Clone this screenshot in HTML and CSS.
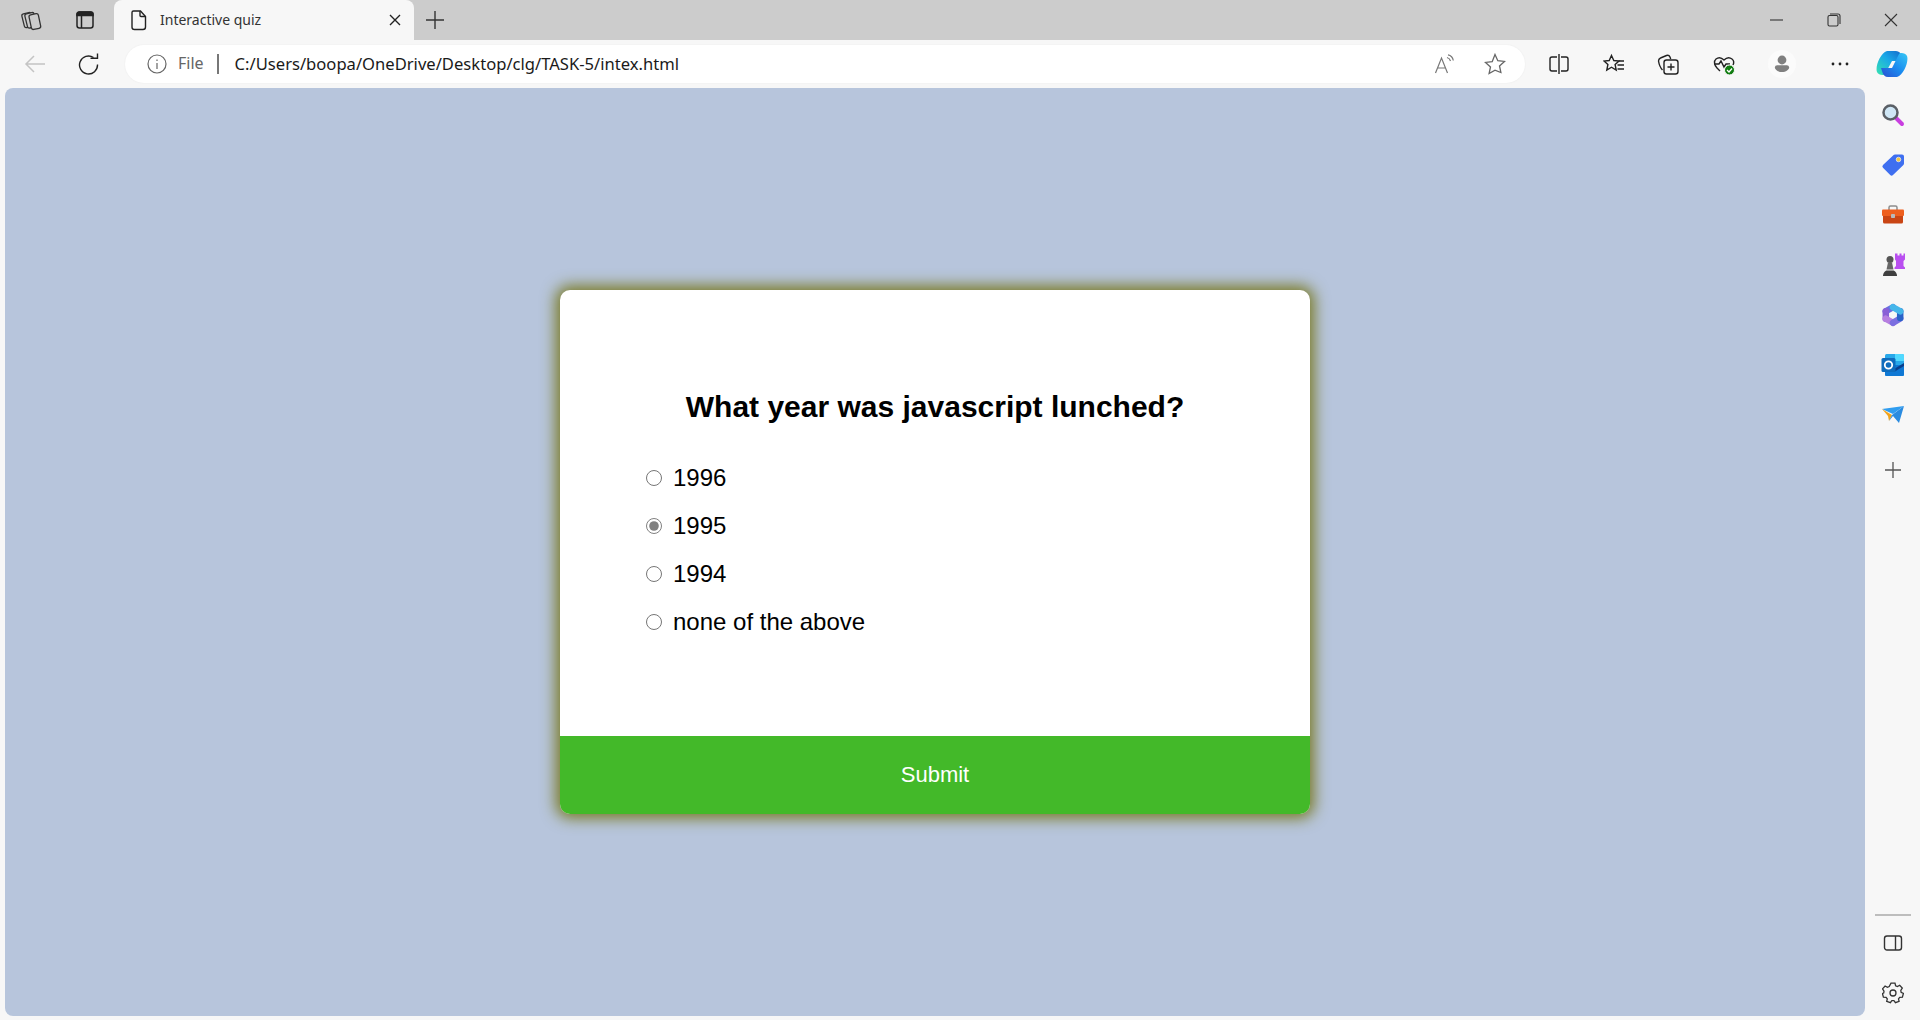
FILE: index.html
```html
<!DOCTYPE html>
<html lang="en">
<head>
    <meta charset="UTF-8">
    <title>Interactive quiz</title>
    <link rel="stylesheet" href="styles.css">
</head>
<body>
    <div class="tabstrip">
        <span class="strip-btn">
            <svg width="24" height="24" viewBox="0 0 24 24" fill="#ccc" stroke="#333" stroke-width="1.300"><rect x="3" y="5" width="9.500" height="14" rx="2" transform="rotate(-14 8 12)"/><rect x="6" y="5" width="9.500" height="14.500" rx="2" transform="rotate(-14 11 12)"/><rect x="10" y="6" width="9.500" height="15" rx="2" transform="rotate(-12 15 13)"/></svg>
        </span>
        <span class="strip-btn strip-btn-b">
            <svg width="22" height="22" viewBox="0 0 22 22" fill="none" stroke="#222" stroke-width="1.500"><rect x="3" y="3" width="16" height="16" rx="2.500"/><path d="M3 6.500V5.500A2.500 2.500 0 0 1 5.500 3h11A2.500 2.500 0 0 1 19 5.500v1z" fill="#222"/><path d="M7.500 7v12"/></svg>
        </span>
        <div class="tab">
            <svg width="20" height="22" viewBox="0 0 20 22" fill="none" stroke="#222" stroke-width="1.400"><path d="M4.500 2h7l5 5.500V18a2.500 2.500 0 0 1-2.500 2.500H5.500A2.500 2.500 0 0 1 3 18V3.500A1.500 1.500 0 0 1 4.500 2z"/><path d="M11 2v4.500a1 1 0 0 0 1 1h4.500"/></svg>
            <span class="tab-title">Interactive quiz</span>
            <svg class="tab-close" width="12" height="12" viewBox="0 0 12 12" stroke="#222" stroke-width="1.4"><path d="M1 1l10 10M11 1L1 11"/></svg>
        </div>
        <span class="new-tab">
            <svg width="18" height="18" viewBox="0 0 18 18" stroke="#333" stroke-width="1.400"><path d="M9 0v18M0 9h18"/></svg>
        </span>
        <div class="win-btns">
            <svg width="14" height="14" viewBox="0 0 14 14" stroke="#333" stroke-width="1.100"><path d="M0 7h13"/></svg>
            <svg width="14" height="14" viewBox="0 0 14 14" fill="none" stroke="#333" stroke-width="1.100"><rect x="1" y="2.500" width="10" height="10.500" rx="1.500"/><path d="M3 1h8a2 2 0 0 1 2 2v8"/></svg>
            <svg width="14" height="14" viewBox="0 0 14 14" stroke="#333" stroke-width="1.100"><path d="M1 1l12 12M13 1L1 13"/></svg>
        </div>
    </div>

    <div class="toolbar">
        <span class="nav-btn">
            <svg width="22" height="20" viewBox="0 0 22 20" fill="none" stroke="#c4c4c4" stroke-width="1.500"><path d="M21 10H2M10 2l-8 8 8 8"/></svg>
        </span>
        <span class="nav-btn">
            <svg width="22" height="22" viewBox="0 0 22 22" fill="none" stroke="#222" stroke-width="1.400"><path d="M15.500 4.500a9 9 0 1 0 4 7"/><path d="M12.500 5.200h7V0.500"/></svg>
        </span>
        <div class="address">
            <svg width="20" height="20" viewBox="0 0 20 20" fill="none" stroke="#666" stroke-width="1.200"><circle cx="10" cy="10" r="9"/><path d="M10 9v6M10 5.500v1.500"/></svg>
            <span class="file-label">File</span>
            <span class="addr-sep"></span>
            <span class="url">C:/Users/boopa/OneDrive/Desktop/clg/TASK-5/intex.html</span>
            <span class="addr-icons">
                <svg width="22" height="22" viewBox="0 0 22 22" fill="none" stroke="#777" stroke-width="1.200"><path d="M1.500 20L7.500 5l6 15M3.500 15h8"/><path d="M12 3.500c2 .5 3 1.500 3.500 3.500M13 .8c3 .5 4.800 2.700 5.300 5.700" transform="translate(1 1)"/></svg>
                <svg width="22" height="22" viewBox="0 0 22 22" fill="none" stroke="#666" stroke-width="1.300"><path d="M11 1.500l2.800 6.200 6.700.7-5 4.500 1.400 6.600L11 17.200l-5.900 3.300 1.400-6.600-5-4.500 6.700-.7z"/></svg>
            </span>
        </div>
        <div class="tools">
            <svg width="22" height="22" viewBox="0 0 22 22" fill="none" stroke="#222" stroke-width="1.400"><path d="M9 4H4a2 2 0 0 0-2 2v10a2 2 0 0 0 2 2h5M13 4h5a2 2 0 0 1 2 2v10a2 2 0 0 1-2 2h-5M11 1v20"/></svg>
            <svg width="22" height="22" viewBox="0 0 22 22" fill="none" stroke="#222" stroke-width="1.400"><path d="M8.500 2.500l2.300 5 5.200.5-3.900 3.500 1.100 5.500-4.700-2.800-4.700 2.800 1.100-5.500L1 8l5.200-.5z"/><path d="M15.500 8H21M14.500 12H21M14.500 16H21"/></svg>
            <svg width="22" height="22" viewBox="0 0 22 22" fill="none" stroke="#222" stroke-width="1.400"><rect x="7" y="7" width="14" height="14" rx="2.500"/><path d="M14 10.500v7M10.500 14h7"/><path d="M5.500 17C3.500 15 2 11 1.500 8c0-1.500.7-2.500 2-3l6-2.500c1.500-.5 2.800 0 3.500 1.500l.7 2"/></svg>
            <svg width="24" height="24" viewBox="0 0 24 24" fill="none"><path d="M8 19l-3-3C2 13 1.800 9 4 7c2.500-2 5.500-1.500 8 1 2.500-2.500 5.500-3 8-1 1.800 1.500 2 4 1 6" stroke="#222" stroke-width="1.400"/><path d="M2 12h5l2-3 3 6 2-3h4" stroke="#222" stroke-width="1.400"/><circle cx="17.500" cy="18" r="5" fill="#107c10" stroke="#f7f7f7"/><path d="M15 18l2 2 3-3.500" stroke="#fff" stroke-width="1.300"/></svg>
            <span class="profile">
                <svg width="16" height="18" viewBox="0 0 20 22" fill="#808080"><circle cx="10" cy="6" r="5.500"/><path d="M1 15a3 3 0 0 1 3-2.500h12a3 3 0 0 1 3 2.500c0 3-4 6-9 6s-9-3-9-6z"/></svg>
            </span>
            <svg width="22" height="22" viewBox="0 0 22 22" fill="#222"><circle cx="4" cy="11" r="1.400"/><circle cx="11" cy="11" r="1.400"/><circle cx="18" cy="11" r="1.400"/></svg>
            <svg class="copilot" width="32" height="28" viewBox="0 0 32 28" fill="none">
                <defs>
                    <linearGradient id="copilotLeft" x1="0" y1="1" x2="1" y2="0"><stop offset="0" stop-color="#36e3b0"/><stop offset=".55" stop-color="#1aa8e8"/><stop offset="1" stop-color="#1565c8"/></linearGradient>
                    <linearGradient id="copilotRight" x1="0" y1="1" x2="1" y2="0"><stop offset="0" stop-color="#2a4fd0"/><stop offset=".5" stop-color="#1a8cf0"/><stop offset="1" stop-color="#38c8f4"/></linearGradient>
                </defs>
                <path d="M11 1h9c3 0 5 2 6 6l1 4H16l-7 13c-1 2-7 1-8-2C-1 17 4 3 11 1z" fill="url(#copilotLeft)"/>
                <path d="M21 27h-9c-3 0-5-2-6-6l-1-3h11l7-14c1-2 7-1 8 2 2 5-3 19-10 21z" fill="url(#copilotRight)"/>
            </svg>
        </div>
    </div>

    <div class="workspace">
        <main class="page">
            <form class="quiz-card">
                <div class="quiz-body">
                    <h2 class="question">What year was javascript lunched?</h2>
                    <ul class="answers">
                        <li><label><input type="radio" name="answer"> 1996</label></li>
                        <li><label><input type="radio" name="answer" checked> 1995</label></li>
                        <li><label><input type="radio" name="answer"> 1994</label></li>
                        <li><label><input type="radio" name="answer"> none of the above</label></li>
                    </ul>
                </div>
                <button type="button" class="submit">Submit</button>
            </form>
        </main>

        <aside class="sidebar">
            <span class="side-icon">
                <svg width="24" height="24" viewBox="0 0 24 24" fill="none"><path d="M14 14l7 7" stroke="#c93fe0" stroke-width="4" stroke-linecap="round"/><circle cx="9.500" cy="9.500" r="7" fill="#cfe6f5" stroke="#5a5f66" stroke-width="2.500"/></svg>
            </span>
            <span class="side-icon">
                <svg width="24" height="24" viewBox="0 0 24 24"><path d="M14 1.500h7a2 2 0 0 1 2 2v7a2 2 0 0 1-.6 1.400L12 22a2 2 0 0 1-2.800 0L2 14.800a2 2 0 0 1 0-2.800L12.600 2a2 2 0 0 1 1.400-.5z" fill="#3f6ff0"/><circle cx="17.500" cy="6.500" r="2.300" fill="#f2c744" stroke="#fff" stroke-width=".6"/></svg>
            </span>
            <span class="side-icon">
                <svg width="24" height="24" viewBox="0 0 24 24" fill="none"><path d="M8 7V4.500A1.500 1.500 0 0 1 9.500 3h5A1.500 1.500 0 0 1 16 4.500V7" stroke="#8d8d8d" stroke-width="1.500"/><rect x="1" y="6.500" width="22" height="6.500" rx="1" fill="#ee5f1e"/><path d="M2 13h20v6a1.500 1.500 0 0 1-1.500 1.500h-17A1.500 1.500 0 0 1 2 19z" fill="#c94514"/><rect x="10" y="11" width="4" height="4" rx=".8" fill="#b9b9b9"/></svg>
            </span>
            <span class="side-icon">
                <svg width="24" height="24" viewBox="0 0 24 24"><path d="M14 0.500h2.500v2h2v-2h2v2h2v-2H24v6l-1.500 1.500v5L24 14.500V16H13.500v-1.500L15 13V8l-1-1.500z" fill="#b94ff0"/><circle cx="9" cy="6.500" r="3.500" fill="#555"/><path d="M7 9.500h4l1.500 7h-7z" fill="#666"/><path d="M2 23c0-3 2-5.500 4-5.500h6c2 0 4 2.500 4 5.500z" fill="#3f3f3f"/></svg>
            </span>
            <span class="side-icon">
                <svg width="24" height="24" viewBox="0 0 24 24" fill="none" stroke-width="6.500" stroke-linecap="round"><path d="M4.800 8.300L12 4.200" stroke="#6a6fe0"/><path d="M4.800 8.300v7.400" stroke="#8a5fd6"/><path d="M4.800 15.700L12 19.800" stroke="#b77fe0"/><path d="M12 19.800l7.200-4.400" stroke="#7b6fe0"/><path d="M19.200 8.300v6.700" stroke="#2a62c8"/><path d="M12 4.200l7.200 4.100" stroke="#45b6ea"/></svg>
            </span>
            <span class="side-icon">
                <svg width="24" height="24" viewBox="0 0 24 24"><rect x="4" y="1" width="19" height="22" rx="1.500" fill="#28a8ea"/><path d="M14 1h7.500A1.500 1.500 0 0 1 23 2.500V8h-9z" fill="#50d9ff"/><path d="M4 12h19v9.500a1.500 1.500 0 0 1-1.500 1.500h-16A1.500 1.500 0 0 1 4 21.500z" fill="#0f78d4"/><path d="M13 16l10-6v3l-10 6z" fill="#0a3f8c"/><rect x="0.500" y="5" width="14" height="14" rx="1.500" fill="#0f6cbd"/><circle cx="7.500" cy="12" r="3.700" fill="none" stroke="#fff" stroke-width="1.800"/></svg>
            </span>
            <span class="side-icon">
                <svg width="24" height="24" viewBox="0 0 24 24"><path d="M1 6l22-3-11 8z" fill="#2f9df0"/><path d="M1 6l6 7 1 5 3-6z" fill="#f2a41c"/><path d="M8 18l4-5 6 7 5-17-12 9z" fill="#2a8be0"/></svg>
            </span>
            <span class="side-icon side-icon-add">
                <svg width="16" height="16" viewBox="0 0 16 16" stroke="#555" stroke-width="1.300"><path d="M8 0v16M0 8h16"/></svg>
            </span>
            <span class="side-space"></span>
            <span class="side-rule"></span>
            <span class="side-icon">
                <svg width="20" height="18" viewBox="0 0 20 18" fill="none" stroke="#333" stroke-width="1.400"><rect x="1.500" y="2" width="17" height="14" rx="2.500"/><path d="M12.500 2v14"/></svg>
            </span>
            <span class="side-icon">
                <svg width="22" height="22" viewBox="0 0 22 22" fill="none" stroke="#333" stroke-width="1.300"><circle cx="11" cy="11" r="3"/><path d="M9 1.500h4l.6 2.600 1.800.8 2.300-1.300 2.600 3-1.500 2.200.3 2 2.300 1.200-1 3.800-2.700.1-1.200 1.600.6 2.600-3.700 1.300-1.500-2.200h-2l-1.500 2.200-3.700-1.300.6-2.600-1.200-1.600-2.700-.1-1-3.800L1.700 11.600l.3-2L.5 7.400l2.600-3 2.300 1.300 1.800-.8z" transform="translate(0 -.3) scale(1 .98)"/></svg>
            </span>
        </aside>
    </div>
</body>
</html>
```

FILE: styles.css
```css
/* page frame */
* {
    box-sizing: border-box;
}

html,
body {
    height: 100%;
}

body {
    margin: 0;
    display: flex;
    flex-direction: column;
    font-family: "Liberation Sans", Arial, sans-serif;
    background-color: #f7f7f7;
    overflow: hidden;
}

svg {
    display: block;
    flex: none;
}

/* tab strip */
.tabstrip {
    height: 40px;
    flex: none;
    display: flex;
    align-items: center;
    background-color: #cccccc;
}

.strip-btn {
    margin-left: 20px;
}

.strip-btn-b {
    margin-left: 30px;
}

.tab {
    width: 300px;
    height: 40px;
    margin-left: 18px;
    padding: 0 13px 0 15px;
    display: flex;
    align-items: center;
    background-color: #f7f7f7;
    border-radius: 8px 8px 0 0;
}

.tab-title {
    margin: 0 0 2px 11px;
    font-family: "Noto Sans", sans-serif;
    font-size: 14px;
    color: #333;
}

.tab-close {
    margin-left: auto;
}

.new-tab {
    margin-left: 12px;
}

.win-btns {
    margin-left: auto;
    margin-right: 22px;
    display: flex;
    gap: 43px;
}

/* address bar row */
.toolbar {
    height: 48px;
    flex: none;
    display: flex;
    align-items: center;
    background-color: #f7f7f7;
}

.nav-btn {
    margin-left: 24px;
}

.nav-btn + .nav-btn {
    margin-left: 32px;
}

.address {
    width: 1400px;
    height: 38px;
    flex: none;
    margin-left: 25px;
    padding: 0 19px 0 22px;
    display: flex;
    align-items: center;
    background-color: #fff;
    border-radius: 19px;
    box-shadow: 0 0 2px rgba(0, 0, 0, 0.06);
}

.file-label {
    margin: 0 0 2px 11px;
    font-family: "Noto Sans", sans-serif;
    font-size: 16px;
    color: #666;
}

.addr-sep {
    width: 2px;
    height: 20px;
    margin-left: 13px;
    background-color: #777;
}

.url {
    margin: 0 0 2px 16px;
    font-family: "Noto Sans", sans-serif;
    font-size: 16.6px;
    color: #1a1a1a;
}

.addr-icons {
    margin-left: auto;
    display: flex;
    gap: 28px;
}

.tools {
    flex: 1;
    margin-left: 23px;
    display: flex;
    align-items: center;
    gap: 32.5px;
}

.profile {
    width: 28px;
    height: 28px;
    display: flex;
    align-items: center;
    justify-content: center;
    border-radius: 50%;
    background-color: #fbfbfb;
}

.copilot {
    margin-left: -7px;
}

/* page area and side panel */
.workspace {
    flex: 1;
    display: flex;
    min-height: 0;
}

.page {
    flex: 1;
    margin: 0 0 4px 5px;
    display: flex;
    align-items: center;
    justify-content: center;
    background-color: #b7c5dc;
    border-radius: 8px;
}

.sidebar {
    width: 55px;
    flex: none;
    padding: 2px 0;
    display: flex;
    flex-direction: column;
    align-items: center;
}

.side-icon {
    height: 50px;
    flex: none;
    display: flex;
    align-items: center;
    justify-content: center;
}

.side-icon-add {
    margin-top: 5px;
}

.side-space {
    flex: 1;
}

.side-rule {
    width: 36px;
    height: 2px;
    flex: none;
    margin-bottom: 2px;
    background-color: #bdbdbd;
}

/* quiz card */
.quiz-card {
    width: 750px;
    height: 524px;
    display: flex;
    flex-direction: column;
    background-color: #fff;
    border-radius: 10px;
    box-shadow: 0 0 15px 4px #787820;
    overflow: hidden;
}

.quiz-body {
    flex: 1;
    padding: 99px 80px 0;
}

.question {
    margin: 0;
    font-size: 30px;
    line-height: 36px;
    text-align: center;
    color: #000;
}

.answers {
    margin: 29px 0 0;
    padding: 0;
    list-style: none;
}

.answers li {
    height: 48px;
    font-size: 24px;
    color: #000;
}

.answers label {
    height: 48px;
    display: flex;
    align-items: center;
    gap: 11px;
}

.answers input {
    width: 16px;
    height: 16px;
    margin: 0 0 0 6px;
    accent-color: #808080;
}

.submit {
    height: 78px;
    flex: none;
    border: none;
    background-color: #43b929;
    color: #fff;
    font-family: "Liberation Sans", Arial, sans-serif;
    font-size: 22px;
}
```
